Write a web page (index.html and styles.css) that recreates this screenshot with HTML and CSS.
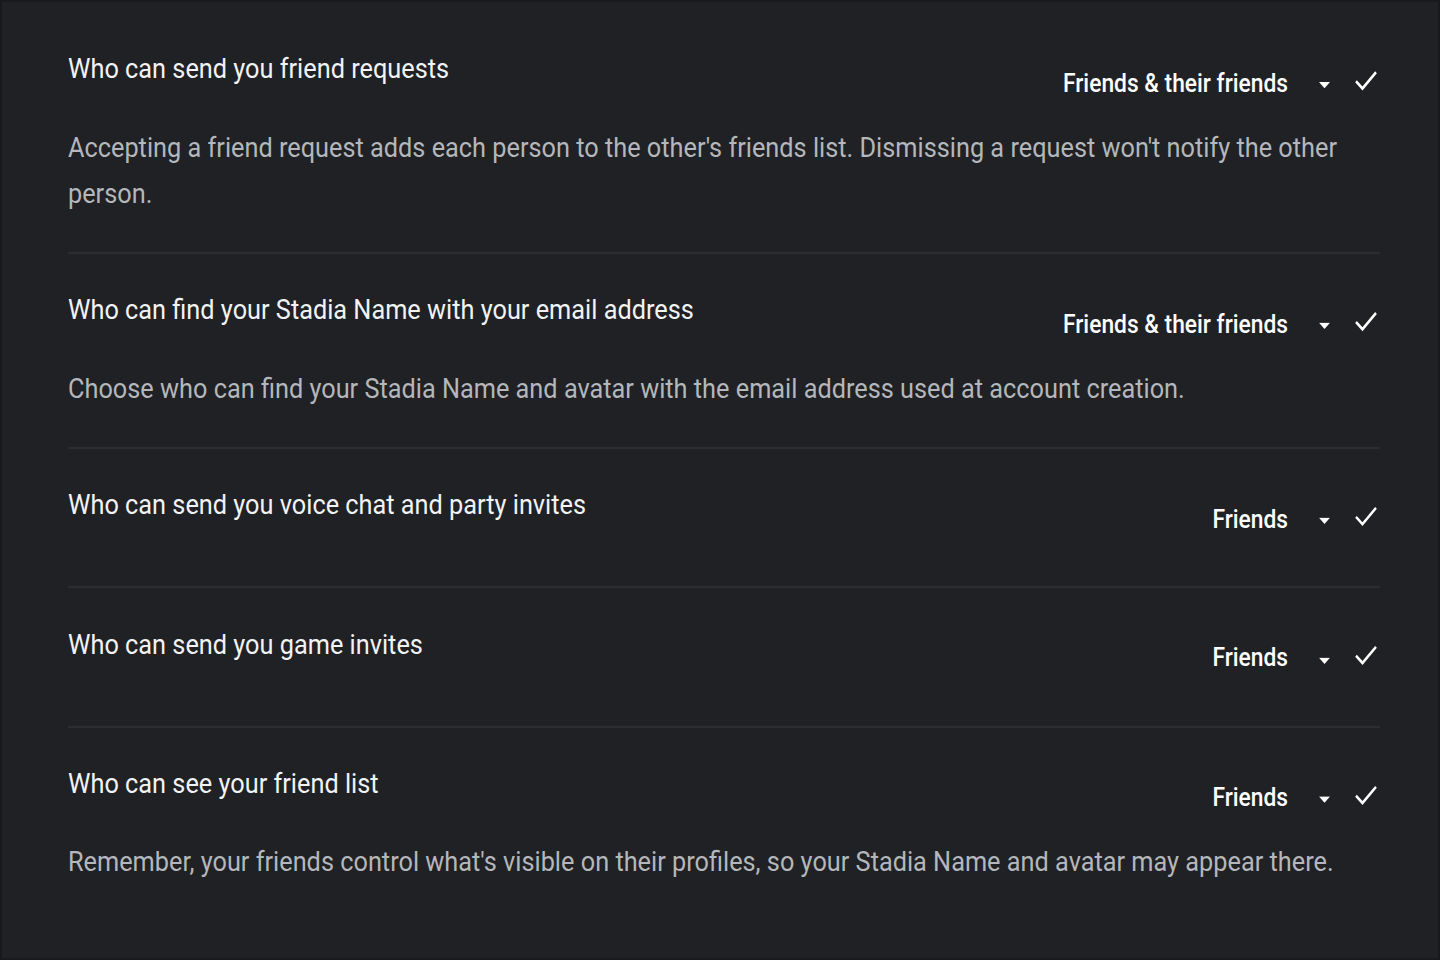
FILE: index.html
```html
<!DOCTYPE html>
<html lang="en">
<head>
<meta charset="utf-8">
<title>Privacy settings</title>
<link rel="stylesheet" href="styles.css">
</head>
<body>
<main class="settings">
  <section class="row">
    <div class="row-head">
      <h2 class="row-title">Who can send you friend requests</h2>
      <div class="control">
        <span class="control-value">Friends &amp; their friends</span>
        <svg class="caret" viewBox="0 0 10 5" width="11" height="6"><path d="M0 0h10L5 5z" fill="#fff"/></svg>
        <svg class="check" viewBox="0 0 24 20" width="24" height="20"><path d="M2 10.5l6.5 6.5L22 2.5" fill="none" stroke="#fff" stroke-width="2.4"/></svg>
      </div>
    </div>
    <p class="row-desc">Accepting a friend request adds each person to the other's friends list. Dismissing a request won't notify the other person.</p>
  </section>

  <section class="row">
    <div class="row-head">
      <h2 class="row-title">Who can find your Stadia Name with your email address</h2>
      <div class="control">
        <span class="control-value">Friends &amp; their friends</span>
        <svg class="caret" viewBox="0 0 10 5" width="11" height="6"><path d="M0 0h10L5 5z" fill="#fff"/></svg>
        <svg class="check" viewBox="0 0 24 20" width="24" height="20"><path d="M2 10.5l6.5 6.5L22 2.5" fill="none" stroke="#fff" stroke-width="2.4"/></svg>
      </div>
    </div>
    <p class="row-desc">Choose who can find your Stadia Name and avatar with the email address used at account creation.</p>
  </section>

  <section class="row">
    <div class="row-head">
      <h2 class="row-title">Who can send you voice chat and party invites</h2>
      <div class="control">
        <span class="control-value">Friends</span>
        <svg class="caret" viewBox="0 0 10 5" width="11" height="6"><path d="M0 0h10L5 5z" fill="#fff"/></svg>
        <svg class="check" viewBox="0 0 24 20" width="24" height="20"><path d="M2 10.5l6.5 6.5L22 2.5" fill="none" stroke="#fff" stroke-width="2.4"/></svg>
      </div>
    </div>
  </section>

  <section class="row">
    <div class="row-head">
      <h2 class="row-title">Who can send you game invites</h2>
      <div class="control">
        <span class="control-value">Friends</span>
        <svg class="caret" viewBox="0 0 10 5" width="11" height="6"><path d="M0 0h10L5 5z" fill="#fff"/></svg>
        <svg class="check" viewBox="0 0 24 20" width="24" height="20"><path d="M2 10.5l6.5 6.5L22 2.5" fill="none" stroke="#fff" stroke-width="2.4"/></svg>
      </div>
    </div>
  </section>

  <section class="row row-last">
    <div class="row-head">
      <h2 class="row-title">Who can see your friend list</h2>
      <div class="control">
        <span class="control-value">Friends</span>
        <svg class="caret" viewBox="0 0 10 5" width="11" height="6"><path d="M0 0h10L5 5z" fill="#fff"/></svg>
        <svg class="check" viewBox="0 0 24 20" width="24" height="20"><path d="M2 10.5l6.5 6.5L22 2.5" fill="none" stroke="#fff" stroke-width="2.4"/></svg>
      </div>
    </div>
    <p class="row-desc">Remember, your friends control what's visible on their profiles, so your Stadia Name and avatar may appear there.</p>
  </section>
</main>
</body>
</html>
```
FILE: styles.css
```css
html, body {
  margin: 0;
  height: 100%;
  background: #202124;
  overflow: hidden;
}
body {
  box-shadow: inset 0 0 0 2px #19191b;
  font-family: Roboto, "Noto Sans", sans-serif;
}
.settings {
  padding: 11.5px 60px 0 68px;
  transform: scaleY(1.12);
  transform-origin: top left;
}
.row {
  padding: 35.5px 0 32px;
  border-bottom: 2px solid #2c2d31;
}
.row-last {
  border-bottom: none;
}
.row-head {
  display: flex;
  align-items: flex-start;
  justify-content: space-between;
}
.row-title {
  margin: 0;
  font-size: 25.3px;
  font-weight: 400;
  line-height: 30px;
  color: #f1f3f4;
}
.control {
  display: flex;
  align-items: center;
  height: 55px;
  margin-right: 2px;
}
.control-value {
  font-size: 22.8px;
  font-weight: 500;
  color: #ffffff;
  line-height: 30px;
}
.caret {
  margin-left: 31px;
  margin-top: 3px;
}
.check {
  margin-left: 24px;
  margin-bottom: 6px;
}
.row-desc {
  margin: 8.5px 0 0;
  font-size: 25.3px;
  line-height: 41px;
  color: #b4b7bb;
}
```
